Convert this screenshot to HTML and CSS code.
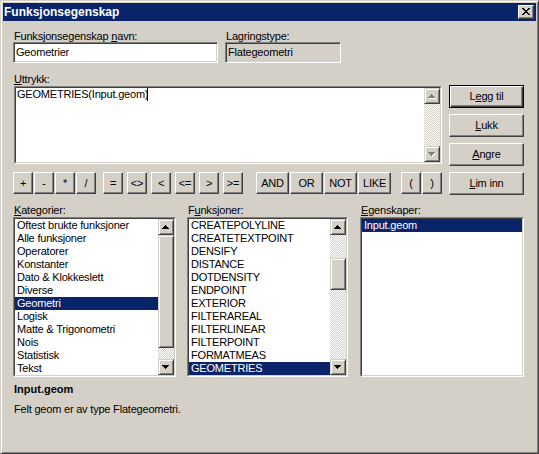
FILE: index.html
```html
<!DOCTYPE html>
<html>
<head>
<meta charset="utf-8">
<title>Funksjonsegenskap</title>
<link rel="stylesheet" href="styles.css">
</head>
<body>
<div class="window">
  <div class="titlebar">
    <span class="title">Funksjonsegenskap</span>
    <div class="close-btn">
      <svg width="14" height="12" viewBox="0 0 14 12" shape-rendering="crispEdges"><path fill="#000" d="M3 2h2v1h-2z M9 2h2v1h-2z M4 3h2v1h-2z M8 3h2v1h-2z M5 4h4v1h-4z M6 5h2v1h-2z M5 6h4v1h-4z M4 7h2v1h-2z M8 7h2v1h-2z M3 8h2v1h-2z M9 8h2v1h-2z"/></svg>
    </div>
  </div>
  <div class="content">
    <div class="row-top">
      <div class="field f-name">
        <div class="lbl">Funksjonsegenskap <u>n</u>avn:</div>
        <div class="edit">Geometrier</div>
      </div>
      <div class="field f-type">
        <div class="lbl">Lagringstype:</div>
        <div class="edit readonly">Flategeometri</div>
      </div>
    </div>

    <div class="row-expr">
      <div class="expr-col">
        <div class="lbl lbl-expr"><u>U</u>ttrykk:</div>
        <div class="sunken textarea">
          <div class="sunken-in">
            <div class="ta-text">GEOMETRIES(Input.geom)<span class="caret"></span></div>
            <div class="vscroll">
              <div class="sbtn"><svg width="14" height="14" viewBox="0 0 14 14" shape-rendering="crispEdges"><path fill="#fff" d="M7 6h1v1h-1z M6 7h3v1h-3z M5 8h5v1h-5z M4 9h7v1h-7z"/><path fill="#808080" d="M6 5h1v1h-1z M5 6h3v1h-3z M4 7h5v1h-5z M3 8h7v1h-7z"/></svg></div>
              <div class="track"></div>
              <div class="sbtn"><svg width="14" height="14" viewBox="0 0 14 14" shape-rendering="crispEdges"><path fill="#fff" d="M4 6h7v1h-7z M5 7h5v1h-5z M6 8h3v1h-3z M7 9h1v1h-1z"/><path fill="#808080" d="M3 5h7v1h-7z M4 6h5v1h-5z M5 7h3v1h-3z M6 8h1v1h-1z"/></svg></div>
            </div>
          </div>
        </div>
        <div class="ops">
          <div class="op-group g1">
            <div class="btn op">+</div>
            <div class="btn op">-</div>
            <div class="btn op">*</div>
            <div class="btn op">/</div>
          </div>
          <div class="op-group g2">
            <div class="btn op">=</div>
            <div class="btn op">&lt;&gt;</div>
            <div class="btn op">&lt;</div>
            <div class="btn op">&lt;=</div>
            <div class="btn op">&gt;</div>
            <div class="btn op">&gt;=</div>
          </div>
          <div class="op-group g3">
            <div class="btn op wide">AND</div>
            <div class="btn op wide">OR</div>
            <div class="btn op wide">NOT</div>
            <div class="btn op wide">LIKE</div>
          </div>
          <div class="op-group g4">
            <div class="btn op">(</div>
            <div class="btn op">)</div>
          </div>
        </div>
      </div>
      <div class="side-col">
        <div class="btn side default">L<u>e</u>gg til</div>
        <div class="btn side"><u>L</u>ukk</div>
        <div class="btn side"><u>A</u>ngre</div>
        <div class="btn side"><u>L</u>im inn</div>
      </div>
    </div>

    <div class="row-lists">
      <div class="list-col c-kat">
        <div class="lbl lbl-list"><u>K</u>ategorier:</div>
        <div class="sunken listbox">
          <div class="sunken-in">
            <ul class="items">
              <li>Oftest brukte funksjoner</li>
              <li>Alle funksjoner</li>
              <li>Operatorer</li>
              <li>Konstanter</li>
              <li>Dato &amp; Klokkeslett</li>
              <li>Diverse</li>
              <li class="sel">Geometri</li>
              <li>Logisk</li>
              <li>Matte &amp; Trigonometri</li>
              <li>Nois</li>
              <li>Statistisk</li>
              <li>Tekst</li>
            </ul>
            <div class="vscroll">
              <div class="sbtn"><svg width="14" height="14" viewBox="0 0 14 14" shape-rendering="crispEdges"><path fill="#000" d="M6 5h1v1h-1z M5 6h3v1h-3z M4 7h5v1h-5z M3 8h7v1h-7z"/></svg></div>
              <div class="track"><div class="thumb thumb-kat"></div></div>
              <div class="sbtn"><svg width="14" height="14" viewBox="0 0 14 14" shape-rendering="crispEdges"><path fill="#000" d="M3 5h7v1h-7z M4 6h5v1h-5z M5 7h3v1h-3z M6 8h1v1h-1z"/></svg></div>
            </div>
          </div>
        </div>
      </div>
      <div class="list-col c-fun">
        <div class="lbl lbl-list">F<u>u</u>nksjoner:</div>
        <div class="sunken listbox">
          <div class="sunken-in">
            <ul class="items">
              <li>CREATEPOLYLINE</li>
              <li>CREATETEXTPOINT</li>
              <li>DENSIFY</li>
              <li>DISTANCE</li>
              <li>DOTDENSITY</li>
              <li>ENDPOINT</li>
              <li>EXTERIOR</li>
              <li>FILTERAREAL</li>
              <li>FILTERLINEAR</li>
              <li>FILTERPOINT</li>
              <li>FORMATMEAS</li>
              <li class="sel">GEOMETRIES</li>
            </ul>
            <div class="vscroll">
              <div class="sbtn"><svg width="14" height="14" viewBox="0 0 14 14" shape-rendering="crispEdges"><path fill="#000" d="M6 5h1v1h-1z M5 6h3v1h-3z M4 7h5v1h-5z M3 8h7v1h-7z"/></svg></div>
              <div class="track"><div class="thumb thumb-fun"></div></div>
              <div class="sbtn"><svg width="14" height="14" viewBox="0 0 14 14" shape-rendering="crispEdges"><path fill="#000" d="M3 5h7v1h-7z M4 6h5v1h-5z M5 7h3v1h-3z M6 8h1v1h-1z"/></svg></div>
            </div>
          </div>
        </div>
      </div>
      <div class="list-col c-egn">
        <div class="lbl lbl-list"><u>E</u>genskaper:</div>
        <div class="sunken listbox">
          <div class="sunken-in">
            <ul class="items">
              <li class="sel">Input.geom</li>
            </ul>
          </div>
        </div>
      </div>
    </div>

    <div class="info">
      <div class="info-title">Input.geom</div>
      <div class="info-text">Felt geom er av type Flategeometri.</div>
    </div>
  </div>
</div>
</body>
</html>
```

FILE: styles.css
```css
* {
  box-sizing: border-box;
}

html, body {
  margin: 0;
  padding: 0;
}

body {
  width: 539px;
  height: 454px;
  overflow: hidden;
  background: #d4d0c8;
  font-family: "Liberation Sans", Arial, sans-serif;
  font-size: 11px;
  letter-spacing: -0.2px;
  color: #000;
}

u {
  text-decoration: underline;
  text-underline-offset: 1px;
}

.window {
  width: 539px;
  height: 454px;
  border: 1px solid;
  border-color: #d4d0c8 #404040 #404040 #d4d0c8;
  box-shadow: inset 1px 1px #fff, inset -1px -1px #808080;
  padding: 2px;
  background: #d4d0c8;
}

.titlebar {
  height: 18px;
  background: #0a246a;
  display: flex;
  align-items: center;
  justify-content: space-between;
  padding: 0 2px 0 1px;
}

.title {
  color: #fff;
  font-weight: bold;
  font-size: 12px;
  line-height: 14px;
  letter-spacing: 0;
}

.close-btn {
  width: 16px;
  height: 14px;
  background: #d4d0c8;
  border: 1px solid;
  border-color: #fff #404040 #404040 #fff;
  box-shadow: inset -1px -1px #808080;
}

.close-btn svg {
  display: block;
}

.content {
  padding: 9px 0 0 10px;
}

.row-top {
  display: flex;
  gap: 7px;
}

.f-name {
  width: 205px;
}

.f-type {
  width: 116px;
}

.lbl {
  height: 12px;
  line-height: 12px;
  padding-left: 1px;
  white-space: nowrap;
}

.edit {
  height: 21px;
  border: 1px solid;
  border-color: #808080 #fff #fff #808080;
  box-shadow: inset 1px 1px #404040, inset -1px -1px #d4d0c8;
  background: #fff;
  padding: 0 2px;
  line-height: 19px;
  white-space: nowrap;
}

.edit.readonly {
  background: #d4d0c8;
}

.sunken {
  border: 1px solid;
  border-color: #808080 #fff #fff #808080;
}

.sunken-in {
  height: 100%;
  border: 1px solid;
  border-color: #404040 #d4d0c8 #d4d0c8 #404040;
  background: #fff;
  display: flex;
}

.row-expr {
  display: flex;
  margin-top: 10px;
}

.expr-col {
  width: 429px;
}

.lbl-expr {
  height: 13px;
  line-height: 13px;
}

.textarea {
  margin-left: 1px;
  height: 78px;
}

.ta-text {
  flex: 1;
  padding: 0 1px;
  line-height: 13px;
  white-space: nowrap;
}

.caret {
  display: inline-block;
  width: 1px;
  height: 13px;
  margin-left: -1px;
  background: #000;
  vertical-align: top;
}

.vscroll {
  width: 16px;
  display: flex;
  flex-direction: column;
}

.sbtn {
  width: 16px;
  height: 16px;
  flex: none;
  background: #d4d0c8;
  border: 1px solid;
  border-color: #d4d0c8 #404040 #404040 #d4d0c8;
  box-shadow: inset 1px 1px #fff, inset -1px -1px #808080;
}

.sbtn svg {
  display: block;
}

.track {
  flex: 1;
  background-color: #d4d0c8;
  background-image: conic-gradient(#fff 25%, #d4d0c8 0 50%, #fff 0 75%, #d4d0c8 0);
  background-size: 2px 2px;
}

.thumb {
  width: 16px;
  background: #d4d0c8;
  border: 1px solid;
  border-color: #d4d0c8 #404040 #404040 #d4d0c8;
  box-shadow: inset 1px 1px #fff, inset -1px -1px #808080;
}

.thumb-kat {
  height: 113px;
}

.thumb-fun {
  margin-top: 23px;
  height: 32px;
}

.ops {
  display: flex;
  margin-top: 8px;
  height: 22px;
}

.op-group {
  display: flex;
}

.g1 {
  gap: 1px;
}

.g2 {
  margin-left: 7px;
  gap: 4px;
}

.g3 {
  margin-left: 13px;
  gap: 1px;
}

.g4 {
  margin-left: 10px;
  gap: 1px;
}

.btn {
  display: flex;
  align-items: center;
  justify-content: center;
  background: #d4d0c8;
  border: 1px solid;
  border-color: #fff #404040 #404040 #fff;
  box-shadow: inset -1px -1px #808080;
  white-space: nowrap;
  line-height: 13px;
}

.op {
  width: 20px;
  height: 22px;
}

.op.wide {
  width: 33px;
}

.side-col {
  margin-left: 7px;
  margin-top: 12px;
  display: flex;
  flex-direction: column;
  gap: 6px;
}

.side {
  width: 75px;
  height: 23px;
}

.side.default {
  border-color: #000;
  box-shadow: inset 1px 1px #fff, inset -1px -1px #404040, inset -2px -2px #808080;
}

.row-lists {
  display: flex;
  margin-top: 8px;
}

.lbl-list {
  height: 14px;
  line-height: 14px;
}

.c-kat {
  width: 163px;
}

.c-fun {
  width: 161px;
  margin-left: 11px;
}

.c-egn {
  width: 164px;
  margin-left: 12px;
}

.listbox {
  height: 160px;
}

.items {
  list-style: none;
  margin: 0;
  padding: 0;
  flex: 1;
  overflow: hidden;
}

.items li {
  height: 13px;
  line-height: 13px;
  padding-left: 2px;
  white-space: nowrap;
}

.items li.sel {
  background: #0a246a;
  color: #fff;
}

.info {
  margin-top: 6px;
  padding-left: 1px;
}

.info-title {
  font-weight: bold;
  line-height: 13px;
  letter-spacing: 0;
}

.info-text {
  margin-top: 7px;
  line-height: 13px;
}
```
